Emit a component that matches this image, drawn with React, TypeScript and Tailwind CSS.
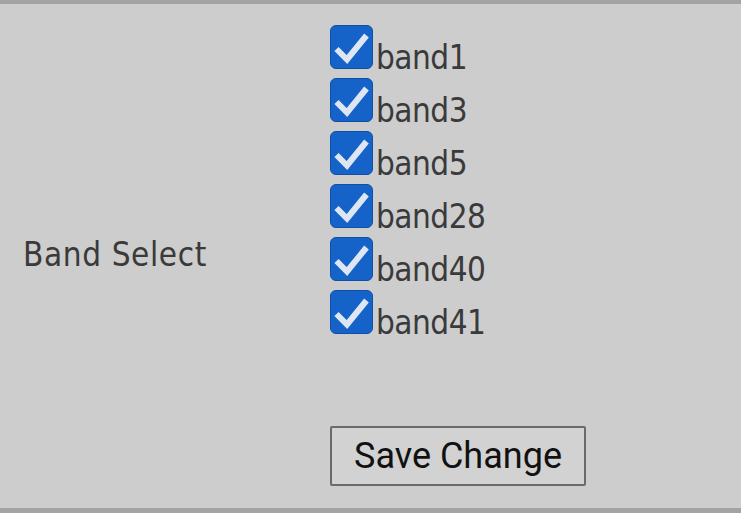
import React from "react";

const BANDS = ["band1", "band3", "band5", "band28", "band40", "band41"];

function CheckMark() {
  return (
    <span className="relative inline-block h-[44px] w-[43px] shrink-0 rounded-[6px] border border-[#0f4fa8] bg-[#1563c9]">
      <svg
        width="43"
        height="44"
        viewBox="0 0 43 44"
        fill="none"
        className="absolute -left-px -top-px"
        aria-hidden
      >
        <path d="M6.5 24L17 34.5L36.5 10.5" stroke="#dde6f2" strokeWidth="6" />
      </svg>
    </span>
  );
}

export default function App() {
  return (
    <div className="flex h-[513px] w-[741px] border-t-4 border-b-[5px] border-[#a3a3a3] bg-[#cdcdcd] [font-family:'DejaVu_Sans_Condensed','DejaVu_Sans',sans-serif]">
      <div className="flex w-[330px] shrink-0 items-center pl-[23px] pb-[4px]">
        <span className="text-[33px] leading-none tracking-[0.6px] text-[#3a3a3a]">Band Select</span>
      </div>
      <div className="flex flex-1 flex-col pt-[21px] pb-[22px]">
        {BANDS.map((b) => (
          <label key={b} className="flex h-[53px] items-baseline">
            <CheckMark />
            <span className="ml-[3px] text-[33px] leading-none tracking-[-0.5px] text-[#3a3a3a]">{b}</span>
          </label>
        ))}
        <div className="mt-auto">
          <button
            type="button"
            className="h-[60px] w-[256px] rounded-[2px] border-2 border-[#6a6a6a] bg-[#d2d2d2] text-[36px] leading-none text-[#111] [font-family:Roboto,sans-serif]"
          >
            Save Change
          </button>
        </div>
      </div>
    </div>
  );
}
